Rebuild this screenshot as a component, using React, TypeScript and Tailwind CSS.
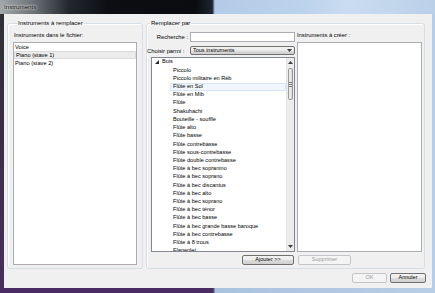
import React from 'react';

const treeItems = [
  'Piccolo',
  'Piccolo militaire en Réb',
  'Flûte en Sol',
  'Flûte en Mib',
  'Flûte',
  'Shakuhachi',
  'Bouteille - souffle',
  'Flûte alto',
  'Flûte basse',
  'Flûte contrebasse',
  'Flûte sous-contrebasse',
  'Flûte double contrebasse',
  'Flûte à bec sopranino',
  'Flûte à bec soprano',
  'Flûte à bec discantus',
  'Flûte à bec alto',
  'Flûte à bec soprano',
  'Flûte à bec ténor',
  'Flûte à bec basse',
  'Flûte à bec grande basse baroque',
  'Flûte à bec contrebasse',
  'Flûte à 8 trous',
  'Flageolet',
];

function Button({ label, disabled, className = '' }: { label: string; disabled?: boolean; className?: string }) {
  return (
    <div
      className={
        'flex items-center justify-center h-[10px] rounded-[2px] border text-[5.5px] leading-none ' +
        (disabled
          ? 'border-[#c3c6c9] bg-[#f4f4f4] text-[#9a9a9a] '
          : 'border-[#707070] bg-[linear-gradient(180deg,#f3f3f3_0%,#ebebeb_50%,#dddddd_51%,#cfcfcf_100%)] text-black ') +
        className
      }
    >
      {label}
    </div>
  );
}

function Arrow({ up }: { up?: boolean }) {
  return (
    <svg width="5" height="3" viewBox="0 0 5 3">
      <path d={up ? 'M0 3 L2.5 0 L5 3 Z' : 'M0 0 L2.5 3 L5 0 Z'} fill="#3c3c3c" />
    </svg>
  );
}

function Scrollbar() {
  return (
    <div className="flex flex-col w-[8px] bg-[#ececec] border-l border-[#e2e2e2]">
      <div className="h-[9px] flex items-center justify-center">
        <Arrow up />
      </div>
      <div className="mx-[1px] mt-[1px] h-[32px] rounded-[2px] border border-[#9a9a9a] bg-[linear-gradient(90deg,#f3f3f3,#d8d8d8)] flex flex-col items-center justify-center gap-[1px]">
        <div className="w-[3px] h-px bg-[#7a7a7a]" />
        <div className="w-[3px] h-px bg-[#7a7a7a]" />
        <div className="w-[3px] h-px bg-[#7a7a7a]" />
      </div>
      <div className="flex-1" />
      <div className="h-[9px] flex items-center justify-center">
        <Arrow />
      </div>
    </div>
  );
}

export default function App() {
  return (
    <div className="w-[435px] h-[293px] flex flex-col overflow-hidden font-['Liberation_Sans',Arial,sans-serif] [background:linear-gradient(180deg,#2e3034,#4b2c62)_0_0/4px_100%_no-repeat,linear-gradient(90deg,#4b2c62_0%,#4b2c62_49%,#a9c2de_49.5%,#b8cee6_100%)]">
      {/* Title bar */}
      <div className="h-[14px] flex items-center pl-[4px] bg-[linear-gradient(90deg,#a3a8ac_0%,#6a6f73_8%,#22262c_16%,#0c0e12_25%,#0a0c10_45%,#1d2530_48.8%,#b3cbe6_49.4%,#bcd3ec_70%,#cadcf0_80%,#bad0e8_100%)]">
        <span className="text-[6.2px] text-black [text-shadow:0_0_3px_#fff,0_0_2px_#fff]">Instruments</span>
      </div>

      {/* Client area */}
      <div className="flex-1 ml-[4px] mr-[3px] mb-[5px] bg-[#f0f0f0] flex flex-col px-[3px] pt-[6px] text-[5.8px] leading-[8px] text-black">
        <div className="flex gap-[3px]">
          {/* Left group */}
          <fieldset className="w-[136px] h-[249px] border border-[#d5dfe5] rounded-[3px] shadow-[inset_1px_1px_0_#fff] px-[5px]">
            <legend className="ml-[4px] px-[1px] leading-[7px] text-[6px]">Instruments à remplacer</legend>
            <div className="mt-[4px] h-[8px] pl-[1px]">Instruments dans le fichier:</div>
            <div className="mt-[3px] h-[223px] bg-white border border-[#abadb3] flex flex-col text-[5.7px]">
              <div className="h-[8px] pl-[1px] leading-[8px]">Voice</div>
              <div className="h-[8px] pl-[1px] leading-[7px] bg-[#ececec] border border-[#dadada] rounded-[1px]">Piano (stave 1)</div>
              <div className="h-[8px] pl-[1px] leading-[8px]">Piano (stave 2)</div>
            </div>
          </fieldset>

          {/* Right group */}
          <fieldset className="w-[279px] h-[249px] border border-[#d5dfe5] rounded-[3px] shadow-[inset_1px_1px_0_#fff]">
            <legend className="ml-[3px] px-[1px] leading-[7px] text-[6px]">Remplacer par</legend>
            <div className="flex gap-[2px]">
              {/* Left column */}
              <div className="w-[148px] flex flex-col">
                <div className="mt-[5px] h-[10px] flex items-center">
                  <span className="w-[43px] text-right pr-[2px]">Recherche :</span>
                  <div className="w-[105px] h-[10px] bg-white border border-[#abadb3]" />
                </div>
                <div className="mt-[4px] h-[9px] flex items-center">
                  <span className="w-[43px] pr-[2px] whitespace-nowrap">Choisir parmi :</span>
                  <div className="w-[105px] h-[9px] flex items-center justify-between pl-[2px] pr-[2px] rounded-[2px] border border-[#707070] bg-[linear-gradient(180deg,#f3f3f3_0%,#ebebeb_50%,#dddddd_51%,#cfcfcf_100%)]">
                    <span className="leading-none text-[5.5px]">Tous instruments</span>
                    <Arrow />
                  </div>
                </div>
                <div className="mt-[2px] ml-[4px] h-[195px] bg-white border border-[#828790] flex overflow-hidden text-[5.6px]">
                  <div className="flex-1 flex flex-col overflow-hidden">
                    <div className="h-[8.23px] shrink-0 flex items-center pl-[3px] gap-[3px]">
                      <svg width="4" height="4" viewBox="0 0 4 4">
                        <path d="M4 0 L4 4 L0 4 Z" fill="#262626" />
                      </svg>
                      <span className="leading-none">Bois</span>
                    </div>
                    {treeItems.map((item, i) => (
                      <div key={i} className="h-[8.23px] shrink-0 flex pl-[18px]">
                        <div
                          className={
                            'flex-1 flex items-center px-[2px] whitespace-nowrap rounded-[1px] border ' +
                            (i === 2 ? 'bg-[#f1f6fd] border-[#d6e5f5]' : 'border-transparent')
                          }
                        >
                          <span className="leading-none">{item}</span>
                        </div>
                      </div>
                    ))}
                  </div>
                  <Scrollbar />
                </div>
                <div className="mt-[3px] flex justify-end pr-[1px]">
                  <Button label="Ajouter >>" className="w-[52px]" />
                </div>
              </div>

              {/* Right column */}
              <div className="w-[125px] flex flex-col">
                <div className="mt-[4px] h-[8px]">Instruments à créer :</div>
                <div className="mt-[3px] h-[210px] bg-white border border-[#abadb3]" />
                <div className="mt-[3px] flex pl-[1px]">
                  <Button label="Supprimer" disabled className="w-[53px]" />
                </div>
              </div>
            </div>
          </fieldset>
        </div>

        <div className="mt-[4px] flex justify-end gap-[3px] mr-[3px]">
          <Button label="OK" disabled className="w-[35px]" />
          <Button label="Annuler" className="w-[36px]" />
        </div>
      </div>
    </div>
  );
}
